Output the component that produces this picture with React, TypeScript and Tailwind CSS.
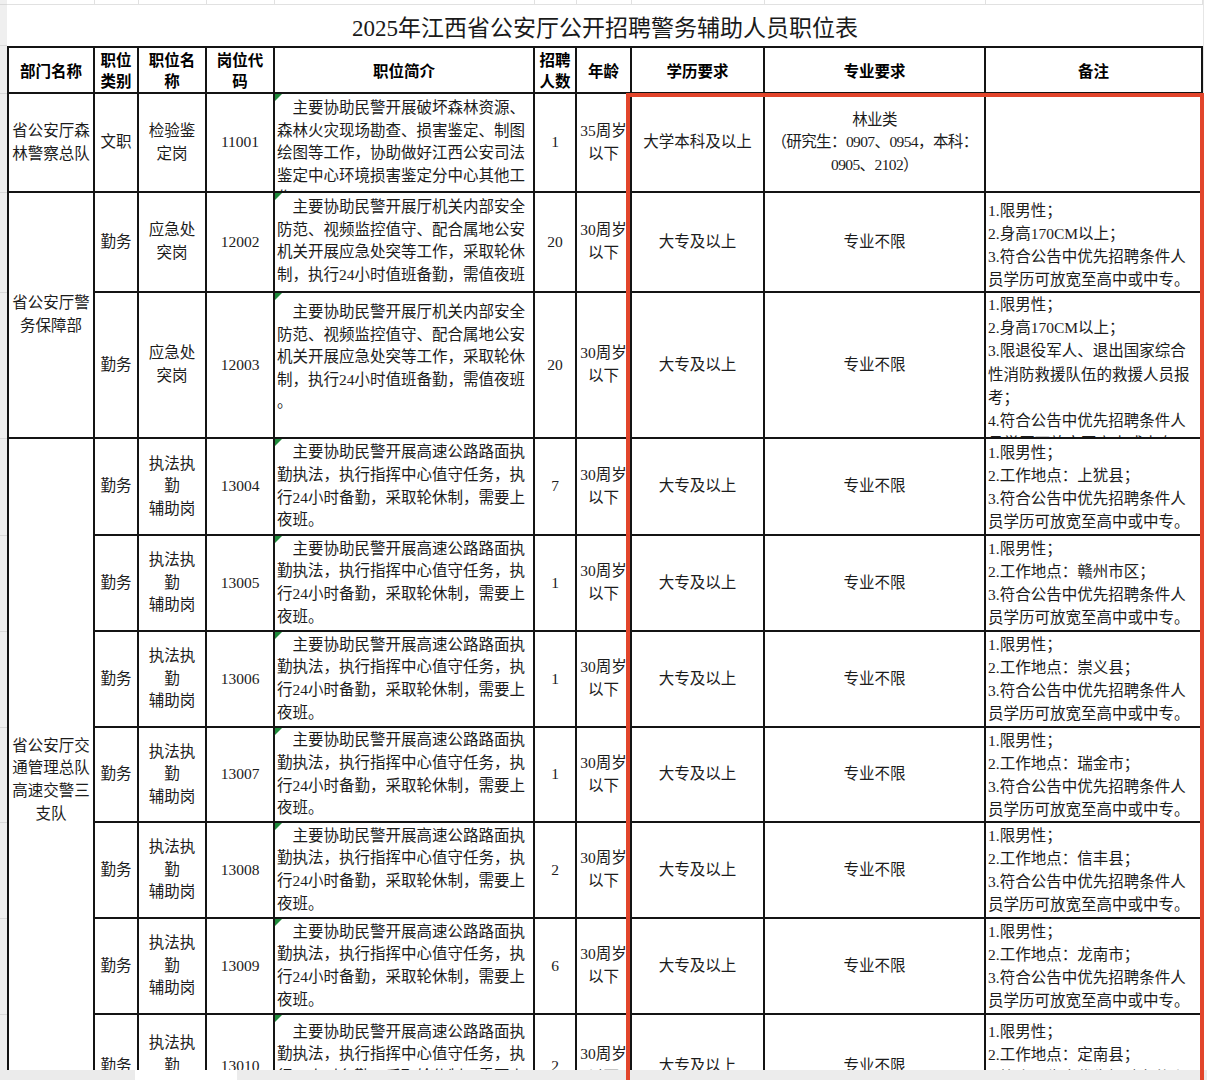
import React from "react";

const B = "border-r-2 border-b-2 border-[#141414] overflow-hidden";
const C = `${B} flex flex-col items-center justify-center text-center`;
const H = `${C} font-bold font-['Noto_Sans_CJK_SC',sans-serif] text-[15.5px] leading-[21px] text-black`;

function Cell({ lines, extra = "" }: { lines: string[]; extra?: string }) {
  return (
    <div className={`${C} ${extra}`}>
      {lines.map((l, i) => (
        <div key={i} className="whitespace-nowrap">
          {l}
        </div>
      ))}
    </div>
  );
}

function Desc({ lines, cls }: { lines: string[]; cls: string }) {
  return (
    <div className={`${B} relative flex flex-col items-start text-left pl-[2px] ${cls}`}>
      <span className="absolute left-0 top-0 w-0 h-0 border-t-[7px] border-t-[#1f8a3b] border-r-[7px] border-r-transparent" />
      {lines.map((l, i) => (
        <div key={i} className={i === 0 ? "whitespace-nowrap pl-[15.5px]" : "whitespace-nowrap"}>
          {l}
        </div>
      ))}
    </div>
  );
}

function Notes({ lines, cls }: { lines: string[]; cls: string }) {
  return (
    <div className={`${B} flex flex-col items-start text-left pl-[2px] ${cls}`}>
      {lines.map((l, i) => (
        <div key={i} className="whitespace-nowrap">
          {l}
        </div>
      ))}
    </div>
  );
}

const D2 = [
  "主要协助民警开展厅机关内部安全",
  "防范、视频监控值守、配合属地公安",
  "机关开展应急处突等工作，采取轮休",
  "制，执行24小时值班备勤，需值夜班",
  "。",
];

const D4 = [
  "主要协助民警开展高速公路路面执",
  "勤执法，执行指挥中心值守任务，执",
  "行24小时备勤，采取轮休制，需要上",
  "夜班。",
];

const traffic = [
  { code: "13004", num: "7", place: "上犹县" },
  { code: "13005", num: "1", place: "赣州市区" },
  { code: "13006", num: "1", place: "崇义县" },
  { code: "13007", num: "1", place: "瑞金市" },
  { code: "13008", num: "2", place: "信丰县" },
  { code: "13009", num: "6", place: "龙南市" },
  { code: "13010", num: "2", place: "定南县" },
];

const rowHeights = [46, 99, 100, 146, 97, 96, 96, 95, 96, 96, 104];

export default function App() {
  return (
    <div className="relative w-[1207px] h-[1080px] overflow-hidden bg-white flex text-[#1c1c1c]">
      {/* left spreadsheet strip */}
      <div className="w-[7px] shrink-0 bg-[#efefef] flex flex-col">
        <div className="h-[5px] shrink-0 border-b border-[#d9d9d9]" />
        <div className="h-[41px] shrink-0 border-b border-[#d9d9d9]" />
        <div className="h-[2px] shrink-0" />
        {rowHeights.map((h, i) => (
          <div key={i} className="shrink-0 border-b border-[#d9d9d9]" style={{ height: h }} />
        ))}
      </div>

      {/* main sheet */}
      <div className="w-[1196px] shrink-0 flex flex-col">
        <div className="h-[5px] shrink-0 grid grid-cols-[88px_44px_68px_68px_260px_42px_55px_133px_221px_217px]">
          {Array.from({ length: 10 }).map((_, i) => (
            <div key={i} className="border-r border-b border-[#e1e1e1]" />
          ))}
        </div>
        <div className="h-[41px] shrink-0 flex items-center justify-center pt-[7px] text-[23px] font-['Liberation_Serif','Noto_Sans_CJK_SC',serif] text-[#1a1a1a]">
          2025年江西省公安厅公开招聘警务辅助人员职位表
        </div>

        <div className="grid grid-cols-[86px_44px_68px_68px_260px_42px_55px_133px_221px_217px] grid-rows-[46px_99px_100px_146px_97px_96px_96px_95px_96px_96px_104px] border-l-2 border-t-2 border-[#141414] font-['Liberation_Serif','Noto_Sans_CJK_SC',serif] text-[15.5px] leading-[22.6px]">
          {/* header */}
          <div className={H}>部门名称</div>
          <div className={H}>
            <div>职位</div>
            <div>类别</div>
          </div>
          <div className={H}>
            <div>职位名</div>
            <div>称</div>
          </div>
          <div className={H}>
            <div>岗位代</div>
            <div>码</div>
          </div>
          <div className={H}>职位简介</div>
          <div className={H}>
            <div>招聘</div>
            <div>人数</div>
          </div>
          <div className={H}>年龄</div>
          <div className={H}>学历要求</div>
          <div className={H}>专业要求</div>
          <div className={H}>备注</div>

          {/* row 1 */}
          <Cell lines={["省公安厅森", "林警察总队"]} />
          <Cell lines={["文职"]} />
          <Cell lines={["检验鉴", "定岗"]} />
          <Cell lines={["11001"]} />
          <Desc
            cls="justify-start pt-[3px]"
            lines={[
              "主要协助民警开展破坏森林资源、",
              "森林火灾现场勘查、损害鉴定、制图",
              "绘图等工作，协助做好江西公安司法",
              "鉴定中心环境损害鉴定分中心其他工",
              "作。",
            ]}
          />
          <Cell lines={["1"]} />
          <Cell lines={["35周岁", "以下"]} />
          <Cell lines={["大学本科及以上"]} />
          <Cell lines={["林业类", "（研究生：0907、0954，本科：", "0905、2102）"]} extra="tracking-[-0.6px]" />
          <div className={B} />

          {/* row 2 */}
          <Cell lines={["省公安厅警", "务保障部"]} extra="row-span-2" />
          <Cell lines={["勤务"]} />
          <Cell lines={["应急处", "突岗"]} />
          <Cell lines={["12002"]} />
          <Desc cls="justify-start pt-[3px]" lines={D2} />
          <Cell lines={["20"]} />
          <Cell lines={["30周岁", "以下"]} />
          <Cell lines={["大专及以上"]} />
          <Cell lines={["专业不限"]} />
          <Notes
            cls="justify-center pt-[6px] leading-[23px]"
            lines={["1.限男性；", "2.身高170CM以上；", "3.符合公告中优先招聘条件人", "员学历可放宽至高中或中专。"]}
          />

          {/* row 3 */}
          <Cell lines={["勤务"]} />
          <Cell lines={["应急处", "突岗"]} />
          <Cell lines={["12003"]} />
          <Desc cls="justify-start pt-[8px]" lines={D2} />
          <Cell lines={["20"]} />
          <Cell lines={["30周岁", "以下"]} />
          <Cell lines={["大专及以上"]} />
          <Cell lines={["专业不限"]} />
          <Notes
            cls="justify-start pt-0 leading-[23.2px]"
            lines={[
              "1.限男性；",
              "2.身高170CM以上；",
              "3.限退役军人、退出国家综合",
              "性消防救援队伍的救援人员报",
              "考；",
              "4.符合公告中优先招聘条件人",
              "员学历可放宽至高中或中专。",
            ]}
          />

          {/* traffic rows */}
          {traffic.map((r, idx) => (
            <React.Fragment key={r.code}>
              {idx === 0 && (
                <Cell lines={["省公安厅交", "通管理总队", "高速交警三", "支队"]} extra="row-span-7 pt-[4px]" />
              )}
              <Cell lines={["勤务"]} />
              <Cell lines={["执法执", "勤", "辅助岗"]} />
              <Cell lines={[r.code]} />
              <Desc cls="justify-center" lines={D4} />
              <Cell lines={[r.num]} />
              <Cell lines={["30周岁", "以下"]} />
              <Cell lines={["大专及以上"]} />
              <Cell lines={["专业不限"]} />
              <Notes
                cls="justify-center leading-[23px]"
                lines={["1.限男性；", `2.工作地点：${r.place}；`, "3.符合公告中优先招聘条件人", "员学历可放宽至高中或中专。"]}
              />
            </React.Fragment>
          ))}
        </div>
      </div>

      {/* right strip */}
      <div className="flex-1 bg-white border-l border-[#e6e6e6]" />

      {/* red highlight overlay */}
      <div className="absolute left-[626px] top-[93px] w-[578px] h-[1000px] border-4 border-[#e2452b] z-20 pointer-events-none" />

      {/* bottom sheet bar */}
      <div className="absolute left-0 bottom-0 w-full h-[10px] flex z-10">
        <div className="w-[135px] bg-[#ebebeb]" />
        <div className="w-[102px] bg-white" />
        <div className="flex-1 bg-[#ececec]" />
      </div>
    </div>
  );
}
